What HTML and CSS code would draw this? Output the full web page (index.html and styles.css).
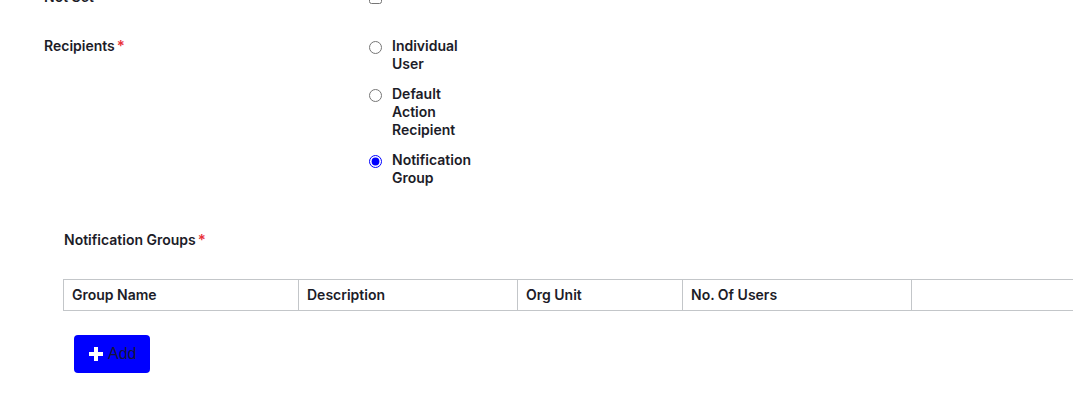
FILE: index.html
```html
<!DOCTYPE html>
<html lang="en">

<head>
    <meta charset="UTF-8">
    <meta name="viewport" content="width=device-width, initial-scale=1.0">
    <title>Notification Recipients</title>
    <link rel="stylesheet" href="styles.css">
</head>

<body>
  <form class="settings-form">
    <div class="form-row first-row">
      <label class="form-label" for="notSet">Not Set</label>
      <div class="form-control">
        <input type="checkbox" id="notSet" class="checkbox">
      </div>
    </div>

    <div class="form-row">
      <div class="form-label">Recipients<span class="required">*</span></div>
      <div class="form-control radio-list">
        <label class="radio-option">
          <input type="radio" name="recipients" value="user">
          <span>Individual User</span>
        </label>
        <label class="radio-option">
          <input type="radio" name="recipients" value="default">
          <span>Default Action Recipient</span>
        </label>
        <label class="radio-option">
          <input type="radio" name="recipients" value="group" checked>
          <span>Notification Group</span>
        </label>
      </div>
    </div>

    <div class="group-section">
      <div class="section-label">Notification Groups<span class="required">*</span></div>

      <table class="group-table">
        <thead>
          <tr>
            <th class="col-name">Group Name</th>
            <th class="col-desc">Description</th>
            <th class="col-org">Org Unit</th>
            <th class="col-users">No. Of Users</th>
            <th class="col-extra"></th>
          </tr>
        </thead>
      </table>

      <button type="button" class="btn-add">
        <svg class="plus-icon" width="16" height="16" viewBox="0 0 16 16">
          <path d="M6 1h4v5h5v4h-5v5H6v-5H1V6h5z" fill="#fff"/>
        </svg>
        Add
      </button>
    </div>
  </form>
</body>

</html>
```

FILE: styles.css
```css
* {
    margin: 0;
    padding: 0;
    box-sizing: border-box;
}

html, body {
    overflow: hidden;
}

body {
    font-family: 'Inter', sans-serif;
    font-size: 14px;
    font-weight: 600;
    line-height: 18px;
    color: #1c1c28;
    background: white;
}

.settings-form {
    margin-top: -12px;
}

.form-row {
    display: flex;
    padding-left: 44px;
    margin-bottom: 32px;
}

.first-row {
    margin-bottom: 29px;
}

.form-label {
    width: 325px;
    flex-shrink: 0;
}

.required {
    color: #e8313b;
    font-size: 15px;
    margin-left: 2px;
}

.checkbox {
    width: 13px;
    height: 13px;
    margin-top: 3px;
}

.radio-list {
    display: flex;
    flex-direction: column;
    gap: 12px;
}

.radio-option {
    display: flex;
    align-items: flex-start;
    gap: 10px;
    width: 112px;
}

.radio-option input {
    width: 13px;
    height: 13px;
    margin-top: 4px;
    flex-shrink: 0;
    accent-color: #0000ff;
}

.radio-option span {
    width: 86px;
}

.group-section {
    padding-left: 63px;
    margin-top: 44px;
}

.section-label {
    padding-left: 1px;
}

.group-table {
    margin-top: 30px;
    border-collapse: collapse;
    table-layout: fixed;
    width: 1160px;
}

.group-table th {
    text-align: left;
    font-weight: 600;
    height: 31px;
    padding: 0 8px;
    border: 1px solid #c3c6c9;
}

.col-name { width: 235px; }
.col-desc { width: 219px; }
.col-org { width: 165px; }
.col-users { width: 229px; }

.btn-add {
    display: flex;
    align-items: center;
    gap: 4px;
    margin: 24px 0 0 11px;
    width: 76px;
    height: 38px;
    padding-left: 14px;
    border: none;
    border-radius: 4px;
    background: #0000ff;
    color: #15153a;
    font-family: 'Liberation Sans', Arial, sans-serif;
    font-size: 16px;
    font-weight: 400;
    cursor: pointer;
}
```
